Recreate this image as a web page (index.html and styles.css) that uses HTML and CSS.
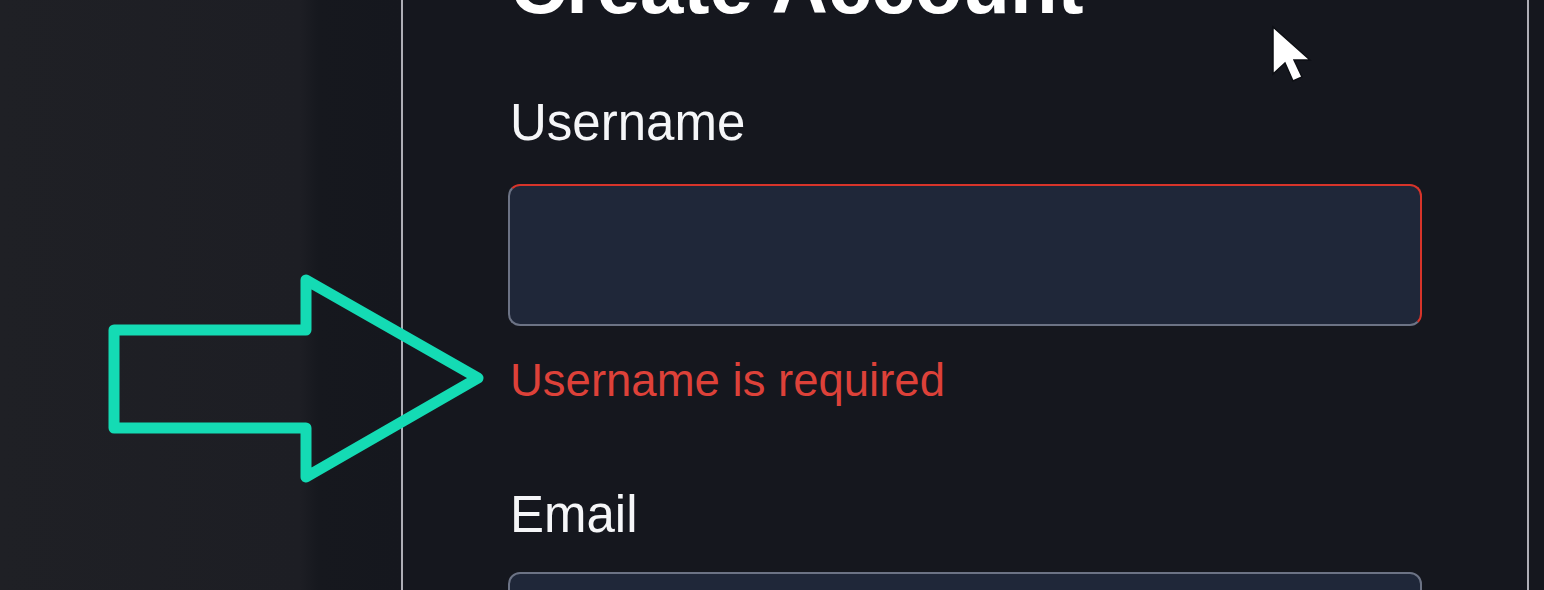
FILE: index.html
```html
<!DOCTYPE html>
<html lang="en">
<head>
<meta charset="utf-8">
<title>Create Account</title>
<link rel="stylesheet" href="styles.css">
</head>
<body>
<div class="stage">
  <div class="side"></div>
  <main class="card">
    <h1 class="title">Create Account</h1>
    <div class="field">
      <label class="label" for="username">Username</label>
      <input class="input input-error" id="username" type="text">
      <p class="error">Username is required</p>
    </div>
    <div class="field field-email">
      <label class="label" for="email">Email</label>
      <input class="input" id="email" type="email">
    </div>
  </main>
  <div class="edge"></div>
</div>
<svg class="overlay" width="1544" height="590" viewBox="0 0 1544 590" aria-hidden="true">
  <polygon class="arrow" points="114,330 306,330 306,280 478,378 306,477 306,428 114,428"/>
  <polygon class="cursor" points="1273,27 1273,74 1285,63 1293,81 1302,77 1294,60 1310,60"/>
</svg>
</body>
</html>
```
FILE: styles.css
```css
html, body {
  margin: 0;
  padding: 0;
  background: #15171e;
  font-family: "Liberation Sans", Arial, sans-serif;
}

.stage {
  display: flex;
  width: 1544px;
  height: 590px;
  overflow: hidden;
}

.side {
  width: 401px;
  flex: none;
  background: linear-gradient(to right, #1f2025 0, #1d1e24 300px, #16181e 318px, #15171e 401px);
}

.card {
  width: 1128px;
  flex: none;
  box-sizing: border-box;
  border-left: 2px solid #aeaeb6;
  border-right: 2px solid #aeaeb6;
  background: #15171e;
  padding: 0 105px;
}

.edge {
  flex: 1;
  background: #15171e;
}

.title {
  margin: -53px 0 0 2px;
  font-size: 78px;
  line-height: 78px;
  font-weight: 700;
  color: #ffffff;
}

.field {
  display: flex;
  flex-direction: column;
  margin-top: 73px;
}

.field-email {
  margin-top: 87px;
}

.label {
  margin-left: 2px;
  font-size: 51px;
  line-height: 50px;
  color: #f5f6f8;
}

.input {
  margin-top: 36px;
  width: 914px;
  height: 142px;
  box-sizing: border-box;
  background: #1f2739;
  border: 2px solid #6c7385;
  border-radius: 12px;
  outline: none;
  padding: 0;
}

.field-email .input {
  margin-top: 32px;
}

.input-error {
  border-top-color: #d7342a;
  border-right-color: #d7342a;
}

.error {
  margin: 32px 0 0 2px;
  font-size: 45.5px;
  line-height: 45px;
  color: #dd4139;
}

.overlay {
  position: absolute;
  left: 0;
  top: 0;
  pointer-events: none;
}

.arrow {
  fill: none;
  stroke: #14dbb4;
  stroke-width: 11;
  stroke-linejoin: round;
}

.cursor {
  fill: #ffffff;
  stroke: #0d0f14;
  stroke-width: 1.5;
  stroke-linejoin: miter;
}
```
